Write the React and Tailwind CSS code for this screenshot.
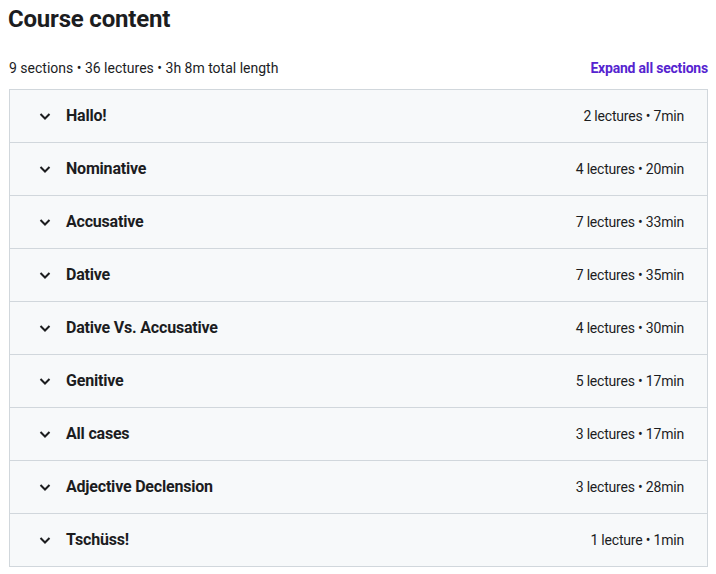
import React from 'react';

const sections = [
  { title: 'Hallo!', meta: '2 lectures • 7min' },
  { title: 'Nominative', meta: '4 lectures • 20min' },
  { title: 'Accusative', meta: '7 lectures • 33min' },
  { title: 'Dative', meta: '7 lectures • 35min' },
  { title: 'Dative Vs. Accusative', meta: '4 lectures • 30min' },
  { title: 'Genitive', meta: '5 lectures • 17min' },
  { title: 'All cases', meta: '3 lectures • 17min' },
  { title: 'Adjective Declension', meta: '3 lectures • 28min' },
  { title: 'Tschüss!', meta: '1 lecture • 1min' },
];

function Chevron() {
  return (
    <svg viewBox="0 0 16 16" className="w-4 h-4 shrink-0" fill="none">
      <path d="M3.5 6l4.5 4.5L12.5 6" stroke="#1c1d1f" strokeWidth="2" />
    </svg>
  );
}

export default function App() {
  return (
    <div className="w-[716px] bg-white text-[#1c1d1f] pl-[9px] pr-[8px] pt-[4px]" style={{ fontFamily: 'Roboto, "Liberation Sans", sans-serif' }}>
      {/* Header */}
      <h2 className="text-[24px] font-bold leading-[30px] -ml-px tracking-[-0.2px]">Course content</h2>
      <div className="flex items-end justify-between mt-[24px] mb-[11px] h-[20px]">
        <span className="text-[14px] leading-[20px]">9 sections • 36 lectures • 3h 8m total length</span>
        <button className="text-[14px] font-bold leading-[20px] tracking-[-0.2px] text-[#5624d0]">Expand all sections</button>
      </div>

      {/* Sections */}
      <div className="border border-[#d1d7dc]">
        {sections.map((s, i) => (
          <div
            key={s.title}
            className={`flex items-center bg-[#f7f9fa] pl-[27px] pr-[23px] ${i > 0 ? 'h-[53px] border-t border-[#d1d7dc]' : 'h-[52px]'}`}
          >
            <Chevron />
            <span className="ml-[13px] text-[16px] font-bold leading-[20px] tracking-[-0.2px]">{s.title}</span>
            <span className="ml-auto text-[14px] leading-[20px] tracking-[-0.2px]">{s.meta}</span>
          </div>
        ))}
      </div>
    </div>
  );
}
